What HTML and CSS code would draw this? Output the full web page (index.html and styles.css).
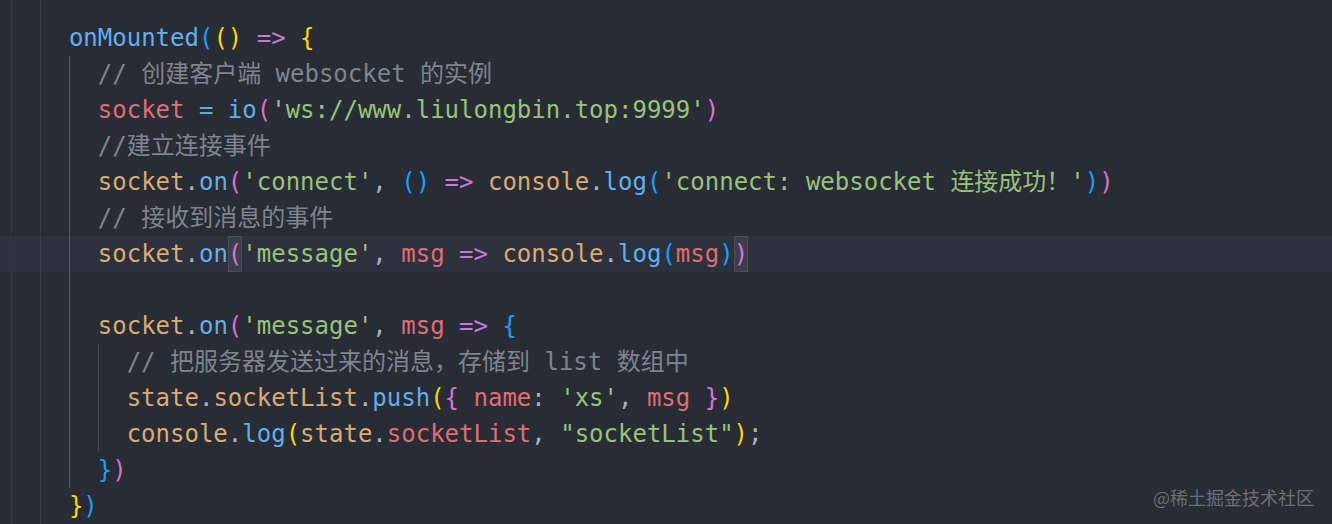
FILE: index.html
```html
<!DOCTYPE html>
<html lang="zh">
<head>
<meta charset="utf-8">
<title>onMounted socket</title>
<link rel="stylesheet" href="styles.css">
</head>
<body>
<div class="editor">
  <div class="line top"></div>
  <div class="line"><i class="ig"></i><code><span class="fn">onMounted</span><span class="b3">(</span><span class="b1">()</span> <span class="kw">=&gt;</span> <span class="b1">{</span></code></div>
  <div class="line"><i class="ig"></i><i class="ig act"></i><code><span class="cm">// 创建客户端 websocket 的实例</span></code></div>
  <div class="line"><i class="ig"></i><i class="ig act"></i><code><span class="var">socket</span> <span class="op">=</span> <span class="fn">io</span><span class="b2">(</span><span class="str">'ws://www.liulongbin.top:9999'</span><span class="b2">)</span></code></div>
  <div class="line"><i class="ig"></i><i class="ig act"></i><code><span class="cm">//建立连接事件</span></code></div>
  <div class="line"><i class="ig"></i><i class="ig act"></i><code><span class="obj">socket</span><span class="p">.</span><span class="fn">on</span><span class="b2">(</span><span class="str">'connect'</span><span class="p">,</span> <span class="b3">()</span> <span class="kw">=&gt;</span> <span class="obj">console</span><span class="p">.</span><span class="fn">log</span><span class="b3">(</span><span class="str">'connect: websocket 连接成功！'</span><span class="b3">)</span><span class="b2">)</span></code></div>
  <div class="line"><i class="ig"></i><i class="ig act"></i><code><span class="cm">// 接收到消息的事件</span></code></div>
  <div class="line current"><i class="ig"></i><i class="ig act"></i><code><span class="obj">socket</span><span class="p">.</span><span class="fn">on</span><span class="b2 match">(</span><span class="str">'message'</span><span class="p">,</span> <span class="var">msg</span> <span class="kw">=&gt;</span> <span class="obj">console</span><span class="p">.</span><span class="fn">log</span><span class="b3">(</span><span class="var">msg</span><span class="b3">)</span><span class="b2 match">)</span></code></div>
  <div class="line"><i class="ig"></i><i class="ig act"></i><code></code></div>
  <div class="line"><i class="ig"></i><i class="ig act"></i><code><span class="obj">socket</span><span class="p">.</span><span class="fn">on</span><span class="b2">(</span><span class="str">'message'</span><span class="p">,</span> <span class="var">msg</span> <span class="kw">=&gt;</span> <span class="b3">{</span></code></div>
  <div class="line"><i class="ig"></i><i class="ig act"></i><i class="ig inner"></i><code><span class="cm">// 把服务器发送过来的消息，存储到 list 数组中</span></code></div>
  <div class="line"><i class="ig"></i><i class="ig act"></i><i class="ig inner"></i><code><span class="obj">state</span><span class="p">.</span><span class="obj">socketList</span><span class="p">.</span><span class="fn">push</span><span class="b1">(</span><span class="b2">{</span> <span class="var">name</span><span class="p">:</span> <span class="str">'xs'</span><span class="p">,</span> <span class="var">msg</span> <span class="b2">}</span><span class="b1">)</span></code></div>
  <div class="line"><i class="ig"></i><i class="ig act"></i><i class="ig inner"></i><code><span class="obj">console</span><span class="p">.</span><span class="fn">log</span><span class="b1">(</span><span class="obj">state</span><span class="p">.</span><span class="var">socketList</span><span class="p">,</span> <span class="str">"socketList"</span><span class="b1">)</span><span class="p">;</span></code></div>
  <div class="line"><i class="ig"></i><i class="ig act"></i><code><span class="b3">}</span><span class="b2">)</span></code></div>
  <div class="line"><i class="ig"></i><code><span class="b1">}</span><span class="b3">)</span></code></div>
  <div class="watermark">@稀土掘金技术社区</div>
</div>
</body>
</html>
```

FILE: styles.css
```css
html, body {
  margin: 0;
  padding: 0;
  background: #282c34;
}

.editor {
  position: relative;
  width: 1332px;
  height: 524px;
  overflow: hidden;
  background: #282c34;
  font-family: "DejaVu Sans Mono", "Noto Sans CJK SC", monospace;
  font-size: 24px;
  color: #abb2bf;
}

.line {
  display: flex;
  align-items: stretch;
  height: 36px;
  padding-left: 11px;
}

.line.top {
  height: 20px;
}

.line::before {
  content: "";
  flex: none;
  width: 28px;
  border-left: 1px solid #33373e;
}

.line.current {
  background: #2d313c;
}

.ig {
  flex: none;
  width: 2ch;
  box-sizing: border-box;
  border-left: 1px solid #3a3e46;
}

.ig.act {
  border-left-color: #5b5f67;
}

.ig.inner {
  border-left-color: #464a52;
}

.line.top .ig,
.line.top::after {
  content: none;
}

.line.top::after {
  content: "";
  flex: none;
  width: 2ch;
  box-sizing: border-box;
  border-left: 1px solid #3a3e46;
}

code {
  font: inherit;
  white-space: pre;
  line-height: 36px;
  display: block;
}

.fn { color: #61afef; }
.kw { color: #c678dd; }
.var { color: #e06c75; }
.str { color: #98c379; }
.obj { color: #dcaa72; }
.op { color: #56b6c2; }
.p { color: #abb2bf; }
.cm { color: #7f848e; }
.b1 { color: #ffd700; }
.b2 { color: #da70d6; }
.b3 { color: #179fff; }

.match {
  display: inline-block;
  height: 36px;
  background: #3b3f4a;
  box-shadow: inset 0 0 0 1px #4a4f5b;
}

.watermark {
  position: absolute;
  right: 18px;
  bottom: 16px;
  font-family: "Noto Sans CJK SC", "Noto Sans", sans-serif;
  font-size: 18px;
  line-height: 22px;
  color: #6c6f76;
}
```
